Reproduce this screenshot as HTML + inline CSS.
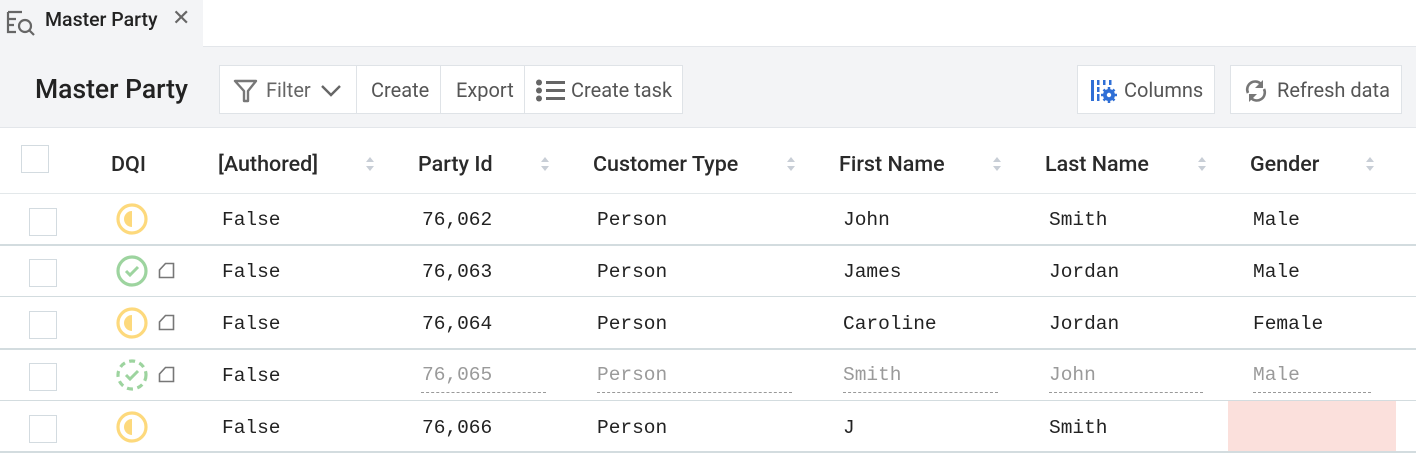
<!DOCTYPE html>
<html><head><meta charset="utf-8"><style>
*{box-sizing:border-box;margin:0;padding:0}
body{width:1416px;height:457px;overflow:hidden;background:#fff;font-family:"Roboto","Liberation Sans",sans-serif;color:#222;position:relative}
.a{position:absolute;white-space:nowrap}
.mono{font-family:"Liberation Mono",monospace;font-size:19.5px;color:#222}
.hd{font-size:21.5px;font-weight:500;color:#2a2a2a;top:152px}
.cb{position:absolute;width:28px;height:28px;border:1px solid #d3dbe0;background:#fff}
.sort{position:absolute;top:156px;width:8px;height:16px}
.btn{position:absolute;top:65px;height:49px;border:1px solid #dfe3e7;background:#fff;font-size:20px;color:#555;line-height:49px}
.dash{position:absolute;top:392px;border-top:1px dashed #999;height:0}
</style></head><body>
<div class="a" style="left:0;top:0;width:203px;height:47px;background:#f3f4f6"></div>
<div class="a" style="left:203px;top:46px;width:1213px;height:1px;background:#e3e6ea"></div>
<svg class="a" style="left:6px;top:9px" width="32" height="28" viewBox="0 0 32 28"><g fill="none" stroke="#666" stroke-width="2.2"><path d="M2 3h14M2 3v20h8M2 10h8M2 16h6M2 23h6"/><circle cx="19" cy="17" r="6"/><path d="M23 21l5 5"/></g></svg>
<div class="a" style="left:45px;top:8px;font-size:19.5px;font-weight:500;color:#222">Master Party</div>
<div class="a" style="left:172px;top:6px;font-size:22px;color:#666">✕</div>
<div class="a" style="left:0;top:47px;width:1416px;height:81px;background:#f3f4f6;border-bottom:1px solid #e3e6ea"></div>
<div class="a" style="left:35px;top:74px;font-size:26.5px;font-weight:500;color:#222">Master Party</div>
<div class="btn" style="left:219px;width:138px"></div>
<svg class="a" style="left:233px;top:78px" width="26" height="26" viewBox="0 0 26 26"><path d="M2 3h21l-8 10v10h-4V13z" fill="none" stroke="#777" stroke-width="2.4" stroke-linejoin="round"/></svg>
<div class="a" style="left:266px;top:78px;font-size:20px;color:#666">Filter</div>
<svg class="a" style="left:320px;top:83px" width="22" height="16"><path d="M2 3l9 9 9-9" fill="none" stroke="#666" stroke-width="2.4"/></svg>
<div class="btn" style="left:356px;width:85px;padding-left:14px">Create</div>
<div class="btn" style="left:440px;width:85px;padding-left:15px">Export</div>
<div class="btn" style="left:524px;width:159px;padding-left:46px">Create task</div>
<svg class="a" style="left:535px;top:79px" width="32" height="24"><g fill="#666"><circle cx="4" cy="3.5" r="3"/><circle cx="4" cy="11.5" r="3"/><circle cx="4" cy="19.5" r="3"/><rect x="11" y="2" width="19" height="3"/><rect x="11" y="10" width="19" height="3"/><rect x="11" y="18" width="19" height="3"/></g></svg>
<div class="btn" style="left:1077px;width:138px;padding-left:46px">Columns</div>
<svg class="a" style="left:1090px;top:78px" width="28" height="26"><g fill="#2f6fd6"><rect x="1" y="2" width="3" height="21"/><rect x="7" y="2" width="2.5" height="5"/><rect x="7" y="9" width="2.5" height="5"/><rect x="7" y="16" width="2.5" height="7"/><rect x="13" y="2" width="2.5" height="5"/><rect x="19" y="2" width="2.5" height="5"/><circle cx="19" cy="17" r="6"/></g><g stroke="#2f6fd6" stroke-width="2.5"><path d="M19 9v16M11 17h16M13.5 11.5l11 11M24.5 11.5l-11 11"/></g><circle cx="19" cy="17" r="2.2" fill="#fff"/></svg>
<div class="btn" style="left:1230px;width:172px;padding-left:46px">Refresh data</div>
<svg class="a" style="left:1243px;top:78px" width="26" height="26" viewBox="0 0 26 26"><g fill="none" stroke="#777" stroke-width="2.6"><path d="M5 15a8 8 0 0 1 13-9"/><path d="M21 11a8 8 0 0 1-13 9"/></g><path d="M20 2v8h-8z" fill="#777"/><path d="M6 24v-8h8z" fill="#777"/></svg>
<div class="cb" style="left:21px;top:145px"></div>
<div class="a hd" style="left:111px">DQI</div>
<div class="a hd" style="left:218px">[Authored]</div>
<div class="a hd" style="left:418px">Party Id</div>
<div class="a hd" style="left:593px">Customer Type</div>
<div class="a hd" style="left:839px">First Name</div>
<div class="a hd" style="left:1045px">Last Name</div>
<div class="a hd" style="left:1250px">Gender</div>
<svg width="0" height="0"><defs><g id="s"><path d="M0 6l4-5 4 5z" fill="#c8ced6"/><path d="M0 10l4 5 4-5z" fill="#c8ced6"/></g></defs></svg>
<svg class="sort" style="left:366px"><use href="#s"/></svg>
<svg class="sort" style="left:541px"><use href="#s"/></svg>
<svg class="sort" style="left:787px"><use href="#s"/></svg>
<svg class="sort" style="left:993px"><use href="#s"/></svg>
<svg class="sort" style="left:1198px"><use href="#s"/></svg>
<svg class="sort" style="left:1366px"><use href="#s"/></svg>
<div class="a" style="left:0;top:193px;width:1416px;height:1px;background:#e3e8ea"></div>
<div class="a" style="left:0;top:244px;width:1416px;height:2px;background:#d3dcdf"></div>
<div class="a" style="left:0;top:296px;width:1416px;height:1px;background:#d3dcdf"></div>
<div class="a" style="left:0;top:348px;width:1416px;height:2px;background:#d3dcdf"></div>
<div class="a" style="left:0;top:400px;width:1416px;height:1px;background:#d3dcdf"></div>
<div class="a" style="left:0;top:451px;width:1416px;height:2px;background:#d3dcdf"></div>
<div class="a" style="left:1228px;top:401px;width:168px;height:50px;background:#fbe0dc"></div>
<div class="cb" style="left:29px;top:208px"></div>
<div class="cb" style="left:29px;top:259px"></div>
<div class="cb" style="left:29px;top:311px"></div>
<div class="cb" style="left:29px;top:363px"></div>
<div class="cb" style="left:29px;top:415px"></div>
<svg width="0" height="0"><defs>
<g id="y"><circle cx="16" cy="16" r="14" fill="none" stroke="#fdd97c" stroke-width="3.2"/><path d="M16 8a8 8 0 0 0 0 16z" fill="#fdd97c"/></g>
<g id="g"><circle cx="16" cy="16" r="14" fill="none" stroke="#9dd49f" stroke-width="3.2"/><path d="M10 16l4 4 8-8" fill="none" stroke="#9dd49f" stroke-width="3"/></g>
<g id="gd"><circle cx="16" cy="16" r="14" fill="none" stroke="#9dd49f" stroke-width="3.2" stroke-dasharray="6 4.5"/><path d="M10 16l4 4 8-8" fill="none" stroke="#9dd49f" stroke-width="3"/></g>
<g id="p"><path d="M1.5 15.5V8l6-6.5h8v14z" fill="none" stroke="#777" stroke-width="1.6"/></g>
</defs></svg>
<svg class="a" style="left:116px;top:203px" width="32" height="32"><use href="#y"/></svg>
<svg class="a" style="left:116px;top:255px" width="32" height="32"><use href="#g"/></svg>
<svg class="a" style="left:116px;top:307px" width="32" height="32"><use href="#y"/></svg>
<svg class="a" style="left:116px;top:359px" width="32" height="32"><use href="#gd"/></svg>
<svg class="a" style="left:116px;top:411px" width="32" height="32"><use href="#y"/></svg>
<svg class="a" style="left:158px;top:262px" width="18" height="18"><use href="#p"/></svg>
<svg class="a" style="left:158px;top:314px" width="18" height="18"><use href="#p"/></svg>
<svg class="a" style="left:158px;top:366px" width="18" height="18"><use href="#p"/></svg>
<div class="a mono" style="left:222px;top:209px">False</div>
<div class="a mono" style="left:422px;top:209px">76,062</div>
<div class="a mono" style="left:597px;top:209px">Person</div>
<div class="a mono" style="left:843px;top:209px">John</div>
<div class="a mono" style="left:1049px;top:209px">Smith</div>
<div class="a mono" style="left:1253px;top:209px">Male</div>
<div class="a mono" style="left:222px;top:261px">False</div>
<div class="a mono" style="left:422px;top:261px">76,063</div>
<div class="a mono" style="left:597px;top:261px">Person</div>
<div class="a mono" style="left:843px;top:261px">James</div>
<div class="a mono" style="left:1049px;top:261px">Jordan</div>
<div class="a mono" style="left:1253px;top:261px">Male</div>
<div class="a mono" style="left:222px;top:313px">False</div>
<div class="a mono" style="left:422px;top:313px">76,064</div>
<div class="a mono" style="left:597px;top:313px">Person</div>
<div class="a mono" style="left:843px;top:313px">Caroline</div>
<div class="a mono" style="left:1049px;top:313px">Jordan</div>
<div class="a mono" style="left:1253px;top:313px">Female</div>
<div class="a mono" style="left:222px;top:365px">False</div>
<div class="a mono" style="left:422px;top:364px;color:#9a9a9a">76,065</div>
<div class="a mono" style="left:597px;top:364px;color:#9a9a9a">Person</div>
<div class="a mono" style="left:843px;top:364px;color:#9a9a9a">Smith</div>
<div class="a mono" style="left:1049px;top:364px;color:#9a9a9a">John</div>
<div class="a mono" style="left:1253px;top:364px;color:#9a9a9a">Male</div>
<div class="dash" style="left:421px;width:125px"></div>
<div class="dash" style="left:597px;width:195px"></div>
<div class="dash" style="left:843px;width:155px"></div>
<div class="dash" style="left:1049px;width:154px"></div>
<div class="dash" style="left:1253px;width:118px"></div>
<div class="a mono" style="left:222px;top:417px">False</div>
<div class="a mono" style="left:422px;top:417px">76,066</div>
<div class="a mono" style="left:597px;top:417px">Person</div>
<div class="a mono" style="left:843px;top:417px">J</div>
<div class="a mono" style="left:1049px;top:417px">Smith</div>
</body></html>
